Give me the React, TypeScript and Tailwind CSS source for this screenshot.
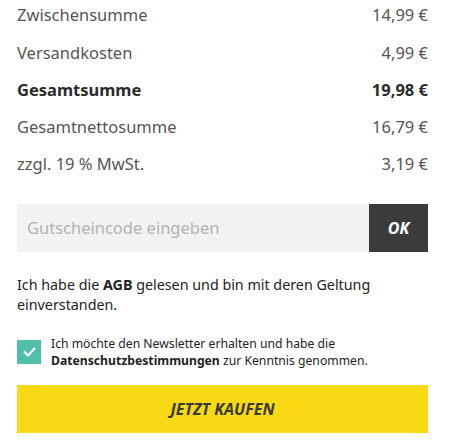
const ROWS = [
    { label: 'Zwischensumme', value: '14,99 €' },
    { label: 'Versandkosten', value: '4,99 €' },
    { label: 'Gesamtsumme', value: '19,98 €', bold: true },
    { label: 'Gesamtnettosumme', value: '16,79 €' },
    { label: 'zzgl. 19 % MwSt.', value: '3,19 €' },
];

export default function App() {
    return (
        <div className="w-[450px] h-[442px] bg-white pl-[17px] pr-[22px] font-['Noto_Sans',sans-serif] overflow-hidden">
            {/* Totals */}
            <div className="flex flex-col -mt-[3px]">
                {ROWS.map((r) => (
                    <div
                        key={r.label}
                        className={`flex items-center justify-between h-[37.3px] text-[16.5px] ${
                            r.bold ? 'font-bold text-[#2b2b2b]' : 'text-[#555]'
                        }`}
                    >
                        <span>{r.label}</span>
                        <span>{r.value}</span>
                    </div>
                ))}
            </div>

            {/* Coupon */}
            <div className="flex mt-[21px] h-[48px]">
                <input
                    placeholder="Gutscheincode eingeben"
                    className="flex-1 bg-[#f1f2f1] px-[10px] text-[16.5px] text-[#333] placeholder:text-[#b3b3b3] outline-none"
                />
                <button className="w-[59px] bg-[#3b3b3b] text-white font-bold italic text-[16px]">OK</button>
            </div>

            {/* Terms */}
            <p className="mt-[23px] text-[14.3px] leading-[20px] text-[#222]">
                Ich habe die <b>AGB</b> gelesen und bin mit deren Geltung einverstanden.
            </p>

            <label className="flex items-center gap-[10px] mt-[20px]">
                <span className="w-[24px] h-[24px] shrink-0 bg-[#4fbfa9] flex items-center justify-center">
                    <svg width="13" height="10" viewBox="0 0 13 10" fill="none">
                        <path d="M1.5 5l3.5 3.5L11.5 1.5" stroke="white" strokeWidth="2.2" strokeLinecap="round" strokeLinejoin="round" />
                    </svg>
                </span>
                <span className="text-[12.2px] leading-[17px] text-[#222]">
                    Ich möchte den Newsletter erhalten und habe die <b>Datenschutzbestimmungen</b> zur Kenntnis genommen.
                </span>
            </label>

            {/* Buy */}
            <button className="mt-[16px] w-full h-[48px] bg-[#f9d914] text-[#3b3b3b] font-bold italic text-[16px]">
                JETZT KAUFEN
            </button>
        </div>
    );
}
